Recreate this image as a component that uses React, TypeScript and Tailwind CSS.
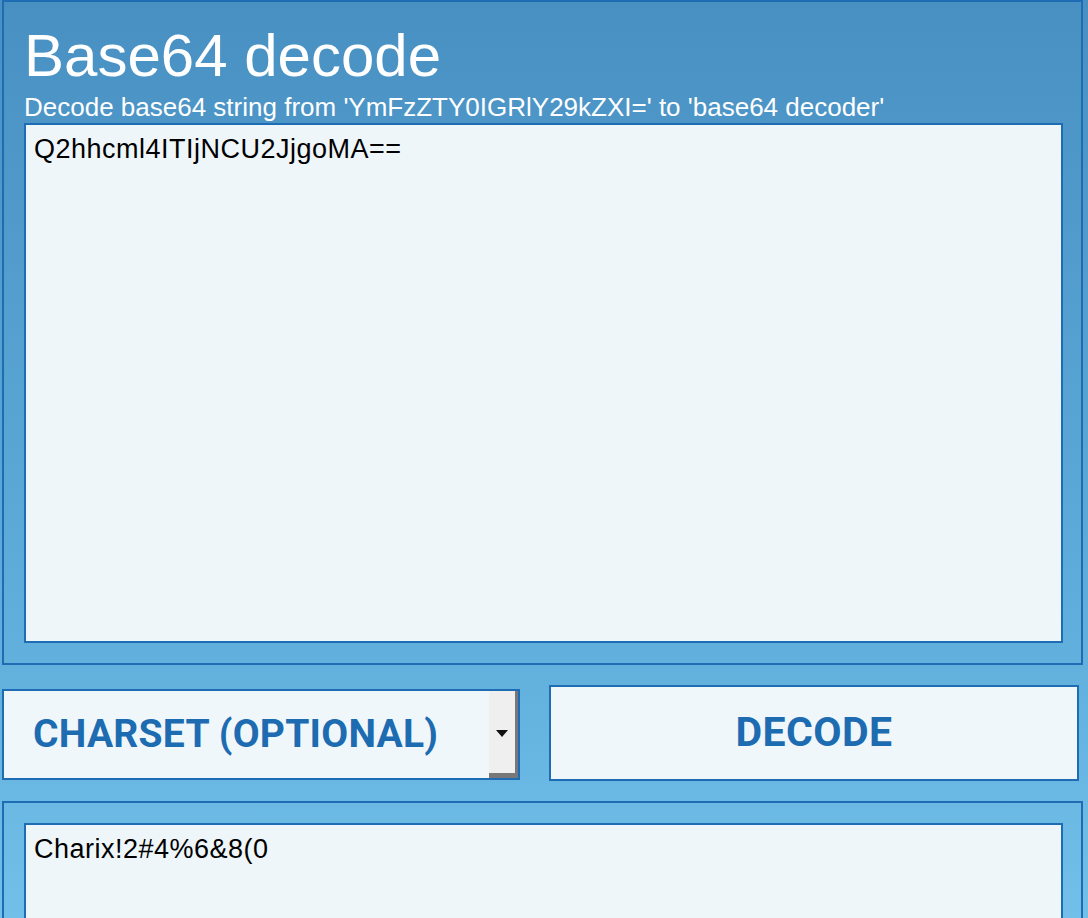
import { useState } from 'react'

export default function App() {
  const [input, setInput] = useState('Q2hhcml4ITIjNCU2JjgoMA==')
  const [output, setOutput] = useState('Charix!2#4%6&8(0')

  return (
    <div className="w-[1088px] h-[918px] overflow-hidden bg-gradient-to-b from-[#4890c2] via-[#60afdc] via-70% to-[#72c0e9] font-['Liberation_Sans',Arial,sans-serif]">
      <div className="flex flex-col gap-[20px] pl-[2px] pr-[5px]">
        {/* Input panel */}
        <div className="border-2 border-[#1e6cb3] pt-[24px] pb-[20px] pl-[20px] pr-[18px]">
          <h1 className="text-[60px] leading-[60px] text-white">Base64 decode</h1>
          <p className="mt-[8px] text-[26px] leading-[26px] text-white">
            Decode base64 string from 'YmFzZTY0IGRlY29kZXI=' to 'base64 decoder'
          </p>
          <textarea
            value={input}
            onChange={(e) => setInput(e.target.value)}
            className="mt-[3px] block h-[520px] w-full resize-none border-2 border-[#1e6cb3] bg-[#eef6fa] pt-[11px] px-[8px] text-[27px] leading-[27px] tracking-[0.5px] text-black outline-none"
          />
        </div>

        {/* Options row */}
        <div className="flex items-start gap-[29px]">
          <div className="mt-[4px] flex h-[91px] w-[518px] items-center border-2 border-[#1e6cb3] bg-[#f0f7fb]">
            <span className="flex-1 pl-[29px] font-['Roboto',sans-serif] text-[39px] font-bold tracking-[0.25px] text-[#1d6cb1]">
              CHARSET (OPTIONAL)
            </span>
            <div className="flex h-full w-[29px] items-center justify-center border-r-[3px] border-b-[5px] border-[#787878] bg-[#efefef]">
              <svg width="12" height="7" viewBox="0 0 12 7" className="mt-[2px]">
                <path d="M0 0h12L6 7z" fill="#111" />
              </svg>
            </div>
          </div>
          <button className="flex h-[96px] w-[530px] items-center justify-center border-2 border-[#1e6cb3] bg-[#f0f7fb] font-['Roboto',sans-serif] text-[41px] font-bold tracking-[0.4px] text-[#1d6cb1]">
            DECODE
          </button>
        </div>

        {/* Output panel */}
        <div className="border-2 border-[#1e6cb3] pt-[20px] pl-[20px] pr-[18px] pb-[20px]">
          <textarea
            value={output}
            onChange={(e) => setOutput(e.target.value)}
            className="block h-[300px] w-full resize-none border-2 border-[#1e6cb3] bg-[#eef6fa] pt-[11px] px-[8px] text-[27px] leading-[27px] tracking-[0.5px] text-black outline-none"
          />
        </div>
      </div>
    </div>
  )
}
